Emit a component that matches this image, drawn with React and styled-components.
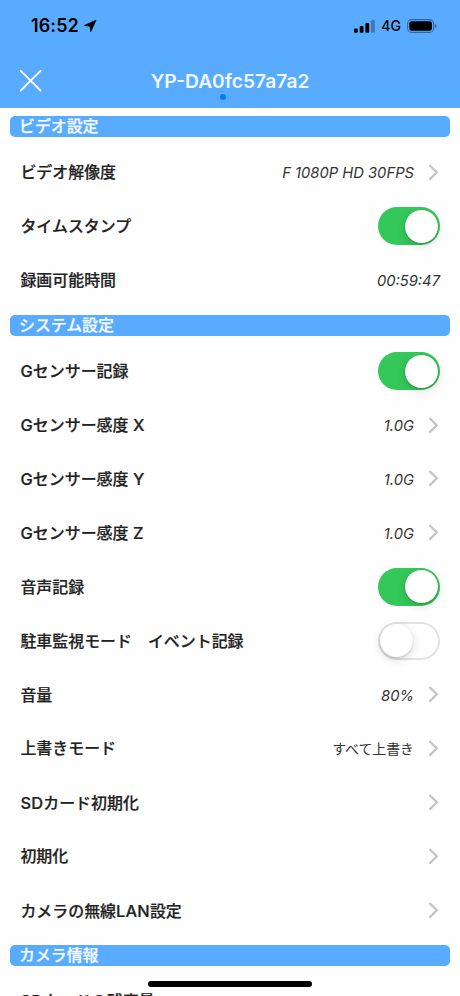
import React from "react";
import styled, { createGlobalStyle } from "styled-components";

const GlobalStyle = createGlobalStyle`
  * { box-sizing: border-box; }
  html, body { margin: 0; background: #fefefe; overflow: hidden; }
  body { font-family: Inter, "Noto Sans CJK JP", sans-serif; }
`;

const Screen = styled.div`
  width: 460px;
  height: 996px;
  overflow: hidden;
  position: relative;
  background: #fefefe;
  color: #222;
`;

const Header = styled.header`
  height: 108.2px;
  background: #58abff;
`;

const StatusBar = styled.div`
  height: 52px;
  padding: 0 23px 0 31px;
  display: flex;
  align-items: center;
  justify-content: space-between;
  color: #000;
`;

const StatusGroup = styled.div`
  display: flex;
  align-items: center;
  gap: ${(p) => p.$gap}px;
`;

const Clock = styled.span`
  font-size: 18px;
  font-weight: 600;
  letter-spacing: 0.1px;
  line-height: 20px;
`;

const Network = styled.span`
  font-size: 14px;
  font-weight: 500;
  letter-spacing: 0.1px;
  line-height: 20px;
`;

const NavBar = styled.div`
  height: 56px;
  padding: 1px 20px 0;
  display: grid;
  grid-template-columns: 40px 1fr 40px;
  align-items: center;
`;

const CloseButton = styled.button`
  width: 22px;
  height: 22px;
  padding: 0;
  border: 0;
  background: none;
  display: flex;
`;

const Title = styled.h1`
  margin: 1px 0 0;
  position: relative;
  text-align: center;
  color: #eff8ff;
  font-size: 19.2px;
  font-weight: 600;
  line-height: 24px;
  white-space: nowrap;
`;

const PageDot = styled.i`
  position: absolute;
  left: 160px;
  top: 25px;
  width: 6px;
  height: 6px;
  border-radius: 50%;
  background: #067cf0;
`;

const SectionTitle = styled.h2`
  margin: 8px 10px;
  height: 20.8px;
  padding-left: 9px;
  border-radius: 5px;
  background: #58abff;
  color: #f4faff;
  font-size: 15.9px;
  font-weight: 500;
  line-height: 21px;
  -webkit-text-stroke: 0.25px currentColor;
`;

const Row = styled.div`
  height: 53.95px;
  padding: 0 20px;
  display: flex;
  align-items: center;
  justify-content: space-between;
`;

const Label = styled.span`
  padding: 2.7px 0 0 0.4px;
  font-size: 15.95px;
  font-weight: 500;
  line-height: 24px;
  white-space: pre;
  -webkit-text-stroke: 0.2px currentColor;
`;

const Section = styled.section`
  display: flow-root;

  &:last-of-type ${Label} {
    padding-top: 0.7px;
  }
`;

const Latin = styled.span`
  font-size: 16.4px;
  letter-spacing: 0.2px;
`;

const Trailing = styled.div`
  display: flex;
  align-items: center;
  gap: 14px;
`;

const Value = styled.span`
  font-size: ${(p) => (p.$cjk ? 13.9 : 14.75)}px;
  font-style: ${(p) => (p.$cjk ? "normal" : "italic")};
  line-height: 20px;
  color: #333;
  padding-top: ${(p) => (p.$cjk ? 2 : 3)}px;
`;

const Switch = styled.span`
  width: 62.5px;
  height: 38px;
  margin-top: 1px;
  padding: 2.5px;
  border-radius: 19px;
  display: flex;
  justify-content: ${(p) => (p.$on ? "flex-end" : "flex-start")};
  background: ${(p) => (p.$on ? "#34c759" : "#fefefe")};
  box-shadow: ${(p) => (p.$on ? "none" : "inset 0 0 0 2px #e3e3e4")};
`;

const Knob = styled.span`
  width: 33px;
  height: 33px;
  border-radius: 50%;
  background: #fff;
  box-shadow: 0 3px 8px rgba(0, 0, 0, 0.14), 0 1px 2px rgba(0, 0, 0, 0.16);
`;

const HomeIndicator = styled.div`
  position: absolute;
  left: 148px;
  top: 981px;
  width: 164px;
  height: 6px;
  border-radius: 3px;
  background: #000;
`;

const Icon = styled.svg`
  display: block;
  flex: none;
`;

const Chevron = () => (
  <Icon width="12" height="18" viewBox="0 0 12 18">
    <path d="M2.2 2.7 8.8 9.3l-6.6 6.6" fill="none" stroke="#c4c4c6" strokeWidth="2.3" strokeLinecap="round" />
  </Icon>
);

const sections = [
  {
    title: "ビデオ設定",
    rows: [
      { label: "ビデオ解像度", value: "F 1080P HD 30FPS", link: true },
      { label: "タイムスタンプ", toggle: true, on: true },
      { label: "録画可能時間", value: "00:59:47" },
    ],
  },
  {
    title: "システム設定",
    rows: [
      { label: "Gセンサー記録", toggle: true, on: true },
      { label: "Gセンサー感度 X", value: "1.0G", link: true },
      { label: "Gセンサー感度 Y", value: "1.0G", link: true },
      { label: "Gセンサー感度 Z", value: "1.0G", link: true },
      { label: "音声記録", toggle: true, on: true },
      { label: "駐車監視モード\u3000イベント記録", toggle: true, on: false },
      { label: "音量", value: "80%", link: true },
      { label: "上書きモード", value: "すべて上書き", cjk: true, link: true },
      { label: "SDカード初期化", link: true },
      { label: "初期化", link: true },
      { label: "カメラの無線LAN設定", link: true },
    ],
  },
  {
    title: "カメラ情報",
    rows: [{ label: "SDカードの残容量" }],
  },
];

// Latin runs inside a Japanese label are set slightly larger.
const mixed = (text) =>
  text.split(/([A-Z ]+)/).map((part, i) => (i % 2 ? <Latin key={i}>{part}</Latin> : part));

export default function App() {
  return (
    <Screen>
      <GlobalStyle />
      <Header>
        <StatusBar>
          <StatusGroup $gap={5}>
            <Clock>16:52</Clock>
            <Icon width="14" height="14" viewBox="0 0 14 14">
              <path d="M12 1.2.5 6.4l5.6.9.7 5.3z" fill="#000" stroke="#000" strokeWidth=".8" strokeLinejoin="round" />
            </Icon>
          </StatusGroup>
          <StatusGroup $gap={6}>
            <Icon width="21" height="13" viewBox="0 0 21 13">
              <rect x="0" y="8.5" width="3.8" height="4.3" rx="1" />
              <rect x="5.7" y="6" width="3.8" height="6.8" rx="1" />
              <rect x="11.4" y="3" width="3.8" height="9.8" rx="1" />
              <rect x="17" y="0" width="3.8" height="12.8" rx="1" opacity=".3" />
            </Icon>
            <Network>4G</Network>
            <Icon width="30" height="14" viewBox="0 0 30 14">
              <rect x=".6" y=".6" width="26" height="12.8" rx="4" fill="none" stroke="#000" strokeOpacity=".4" strokeWidth="1.1" />
              <rect x="2.3" y="2.3" width="22.6" height="9.4" rx="2.3" />
              <path d="M28 4.8c1.8.8 1.8 3.6 0 4.4z" opacity=".45" />
            </Icon>
          </StatusGroup>
        </StatusBar>
        <NavBar>
          <CloseButton aria-label="閉じる">
            <Icon width="22" height="22" viewBox="0 0 22 22">
              <path d="M.8.8 20.5 20.5M20.5.8.8 20.5" stroke="#fff" strokeWidth="1.8" strokeLinecap="round" />
            </Icon>
          </CloseButton>
          <Title>
            YP-DA0fc57a7a2
            <PageDot />
          </Title>
        </NavBar>
      </Header>
      {sections.map((section) => (
        <Section key={section.title}>
          <SectionTitle>{section.title}</SectionTitle>
          {section.rows.map((row) => (
            <Row key={row.label}>
              <Label>{mixed(row.label)}</Label>
              <Trailing>
                {row.value && <Value $cjk={row.cjk}>{row.value}</Value>}
                {row.toggle && (
                  <Switch $on={row.on} role="switch" aria-checked={row.on}>
                    <Knob />
                  </Switch>
                )}
                {row.link && <Chevron />}
              </Trailing>
            </Row>
          ))}
        </Section>
      ))}
      <HomeIndicator />
    </Screen>
  );
}
